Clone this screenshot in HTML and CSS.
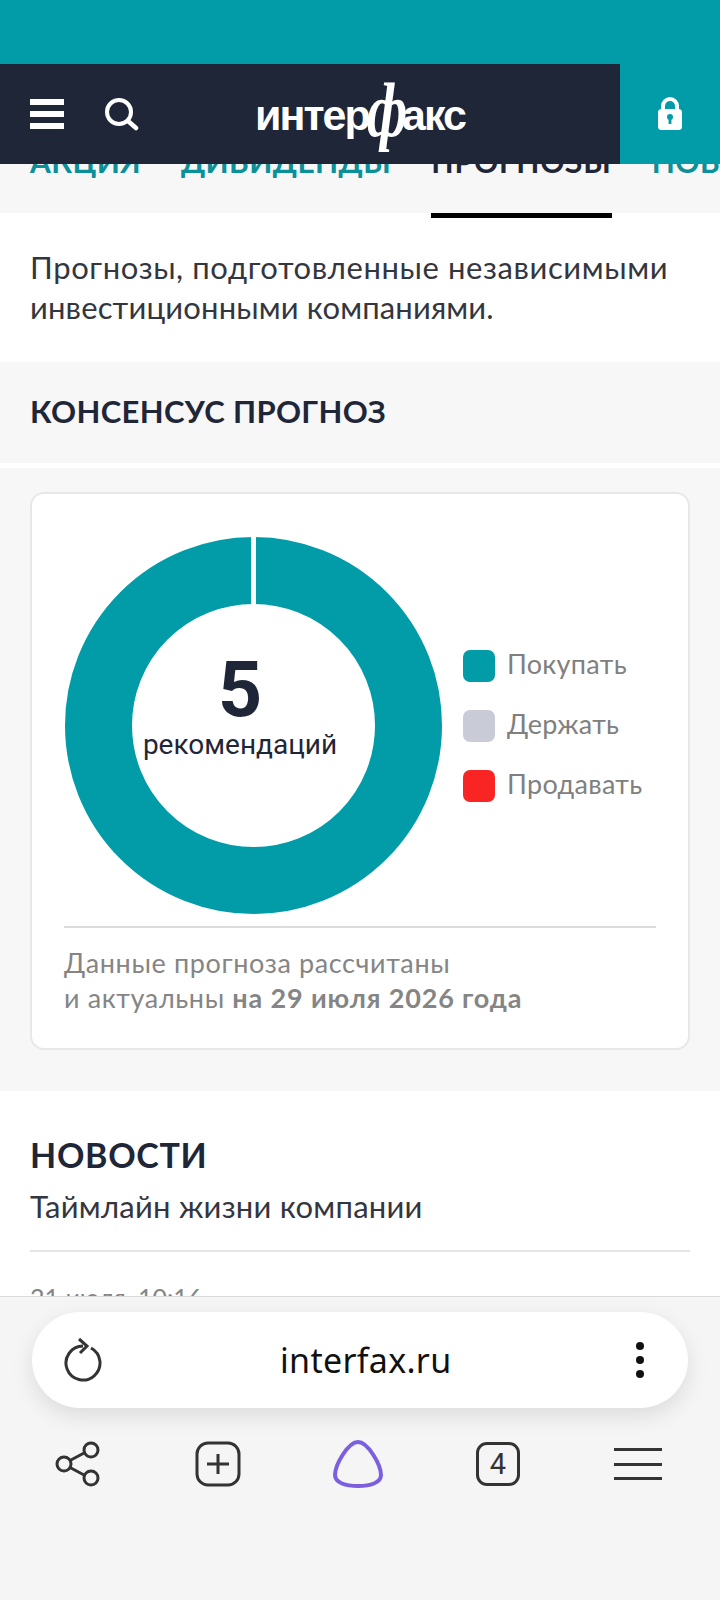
FILE: index.html
```html
<!DOCTYPE html>
<html lang="ru">
  <head>
    <meta charset="utf-8">
    <title>Интерфакс</title>
    <link rel="stylesheet" href="styles.css">
  </head>
  <body>
    <main class="page">
      <nav class="tabs">
        <a class="tab">Акция</a>
        <a class="tab">Дивиденды</a>
        <a class="tab tab-active">Прогнозы</a>
        <a class="tab">Новости</a>
      </nav>

      <p class="intro">Прогнозы, подготовленные независимыми<br><span class="intro-tail">инвестиционными компаниями.</span></p>

      <h2 class="consensus-title">Консенсус прогноз</h2>

      <section class="consensus">
        <div class="card">
          <div class="chart-row">
            <div class="donut">
              <svg width="377" height="377" viewBox="0 0 377 377">
                <circle cx="188.5" cy="188.5" r="155" fill="none" stroke="#019ca8" stroke-width="67"/>
                <rect x="186" y="0" width="5" height="68" fill="#fff"/>
              </svg>
              <div class="donut-label">
                <div class="donut-count">5</div>
                <div class="donut-text">рекомендаций</div>
              </div>
            </div>
            <ul class="legend">
              <li class="legend-item"><span class="swatch swatch-buy"></span><span class="legend-label">Покупать</span></li>
              <li class="legend-item"><span class="swatch swatch-hold"></span><span class="legend-label">Держать</span></li>
              <li class="legend-item"><span class="swatch swatch-sell"></span><span class="legend-label">Продавать</span></li>
            </ul>
          </div>
          <p class="card-note">Данные прогноза рассчитаны<br>и актуальны <b>на 29 июля 2026 года</b></p>
        </div>
      </section>

      <section class="news">
        <h2 class="news-title">Новости</h2>
        <p class="news-sub">Таймлайн жизни компании</p>
        <div class="news-date">21 июля, 10:16</div>
      </section>
    </main>

    <header class="site-header">
      <div class="header-band"></div>
      <div class="header-row">
        <div class="header-main">
          <div class="burger"><span></span><span></span><span></span></div>
          <svg class="search-icon" width="34" height="34" viewBox="0 0 34 34">
            <circle cx="14" cy="15" r="12" fill="none" stroke="#fff" stroke-width="4"/>
            <path d="M23 24l8 7" fill="none" stroke="#fff" stroke-width="4.5" stroke-linecap="round"/>
          </svg>
          <div class="logo">интер<span class="logo-f">ф</span>акс</div>
        </div>
        <div class="header-lock">
          <svg width="26" height="34" viewBox="0 0 26 34">
            <path d="M6 14V9a7 7 0 0 1 14 0v5" fill="none" stroke="#fff" stroke-width="4"/>
            <rect x="1" y="12" width="24" height="21" rx="3.5" fill="#fff"/>
            <circle cx="13" cy="20" r="3" fill="#019ca8"/>
            <rect x="11.6" y="20" width="2.8" height="7" fill="#019ca8"/>
          </svg>
        </div>
      </div>
    </header>

    <footer class="browser-bar">
      <div class="url-pill">
        <svg width="40" height="46" viewBox="0 0 40 46">
          <path d="M27 11A17 17 0 1 1 19 9" fill="none" stroke="#333" stroke-width="3"/>
          <path d="M15 2l8 7-7 7" fill="none" stroke="#333" stroke-width="3"/>
        </svg>
        <span class="url-text">interfax.ru</span>
        <div class="dots"><span></span><span></span><span></span></div>
      </div>
      <div class="toolbar">
        <svg width="46" height="48" viewBox="0 0 46 48">
          <circle cx="9" cy="24" r="7" fill="none" stroke="#333" stroke-width="3"/>
          <circle cx="36" cy="10" r="7" fill="none" stroke="#333" stroke-width="3"/>
          <circle cx="36" cy="38" r="7" fill="none" stroke="#333" stroke-width="3"/>
          <path d="M15 20.500l15-8M15 27.500l15 8" fill="none" stroke="#333" stroke-width="3"/>
        </svg>
        <svg width="46" height="46" viewBox="0 0 46 46">
          <rect x="2" y="2" width="42" height="42" rx="11" fill="none" stroke="#333" stroke-width="3"/>
          <path d="M12 23h22M23 13v20" fill="none" stroke="#333" stroke-width="3"/>
        </svg>
        <svg width="52" height="50" viewBox="0 0 52 50">
          <path d="M26 3C36 3 49 26 49 36C49 44 38 47 26 47C14 47 3 44 3 36C3 26 16 3 26 3Z" fill="none" stroke="#7b5fe0" stroke-width="4"/>
        </svg>
        <div class="tab-count">4</div>
        <div class="menu-lines"><span></span><span></span><span></span></div>
      </div>
    </footer>
  </body>
</html>
```

FILE: styles.css
```css
* {
  box-sizing: border-box;
}

body {
  margin: 0;
  width: 720px;
  height: 1600px;
  position: relative;
  overflow: hidden;
  background: #fff;
  font-family: "Lato", "Open Sans", sans-serif;
  color: #33363e;
}

h2, p, ul {
  margin: 0;
  padding: 0;
}

/* tabs, scrolled under the header */
.tabs {
  display: flex;
  gap: 40px;
  height: 213px;
  padding: 143px 0 0 30px;
  background: #f7f7f8;
}

.tab {
  flex-shrink: 0;
  height: 75px;
  line-height: 36px;
  font-size: 30px;
  font-weight: 700;
  letter-spacing: 0.4px;
  text-transform: uppercase;
  color: #0b8f99;
}

.tab-active {
  color: #1f2638;
  letter-spacing: 0.9px;
  border-bottom: 5px solid #000;
}

.intro {
  padding: 34px 30px 35px;
  font-size: 31px;
  letter-spacing: 0.6px;
  line-height: 40px;
  white-space: nowrap;
}

.intro-tail {
  letter-spacing: 0.15px;
}

.consensus-title {
  height: 101px;
  padding-left: 30px;
  line-height: 98px;
  background: #f7f7f8;
  font-size: 31px;
  font-weight: 700;
  letter-spacing: 0.35px;
  text-transform: uppercase;
  color: #1f2638;
}

.consensus {
  margin-top: 5px;
  padding: 24px 30px 41px;
  background: #f7f7f8;
}

.card {
  height: 558px;
  padding: 43px 32px 0 32px;
  background: #fff;
  border: 2px solid #e8e8ea;
  border-radius: 14px;
}

.chart-row {
  display: flex;
  align-items: center;
  padding-bottom: 12px;
  border-bottom: 2px solid #dcdcdc;
}

.donut {
  position: relative;
  width: 377px;
  height: 377px;
  margin-left: 1px;
  flex-shrink: 0;
}

.donut svg {
  display: block;
}

.donut-label {
  position: absolute;
  left: 0;
  top: 117px;
  width: 350px;
  text-align: center;
}

.donut-count {
  font-family: "Roboto", sans-serif;
  font-size: 77px;
  font-weight: 700;
  line-height: 73px;
  color: #1f2638;
}

.donut-text {
  font-family: "Roboto", sans-serif;
  font-size: 28px;
  line-height: 36px;
  color: #1f2638;
}

.legend {
  list-style: none;
  margin-left: 21px;
  display: flex;
  flex-direction: column;
  gap: 28px;
}

.legend-item {
  display: flex;
  align-items: center;
  gap: 12px;
  height: 32px;
  font-size: 27px;
  letter-spacing: 0.3px;
  color: #808080;
}

.legend-label {
  margin-bottom: 4px;
}

.swatch {
  width: 32px;
  height: 32px;
  border-radius: 7px;
}

.swatch-buy {
  background: #019ca8;
}

.swatch-hold {
  background: #c9ccd6;
}

.swatch-sell {
  background: #f92525;
}

.card-note {
  padding-top: 17px;
  font-size: 27px;
  letter-spacing: 0.62px;
  line-height: 35px;
  color: #858585;
}

.card-note b {
  letter-spacing: 0.85px;
}

.news {
  padding: 42px 30px 0;
}

.news-title {
  font-size: 34px;
  letter-spacing: 0.7px;
  line-height: 44px;
  font-weight: 700;
  text-transform: uppercase;
  color: #1f2638;
}

.news-sub {
  padding: 9px 0 24px;
  font-size: 31px;
  letter-spacing: 0.25px;
  line-height: 40px;
  border-bottom: 2px solid #e6e6e6;
}

.news-date {
  padding-top: 28px;
  font-size: 25px;
  line-height: 34px;
  color: #858585;
}

/* header sits over the page */
.site-header {
  position: absolute;
  top: 0;
  left: 0;
  width: 720px;
}

.header-band {
  height: 64px;
  background: #019ca8;
}

.header-row {
  display: flex;
  height: 100px;
}

.header-main {
  position: relative;
  width: 620px;
  display: flex;
  align-items: center;
  padding-left: 30px;
  background: #1f2638;
}

.burger {
  width: 34px;
  height: 30px;
  display: flex;
  flex-direction: column;
  justify-content: space-between;
}

.burger span {
  height: 6px;
  background: #fff;
}

.search-icon {
  margin-left: 41px;
}

.logo {
  position: absolute;
  left: 255px;
  top: 0;
  line-height: 102px;
  font-family: "Liberation Sans", sans-serif;
  font-size: 43px;
  font-weight: 700;
  letter-spacing: -2px;
  color: #fff;
  white-space: nowrap;
}

.logo-f {
  display: inline-block;
  margin: 0 -12px 0 -9px;
  font-family: "Liberation Serif", serif;
  font-style: italic;
  font-weight: 700;
  font-size: 76px;
  line-height: 0;
  letter-spacing: 0;
  transform: scaleX(0.75) translateY(6px);
}

.header-lock {
  flex: 1;
  display: flex;
  align-items: center;
  justify-content: center;
  background: #019ca8;
  padding-right: 1px;
}

/* browser chrome */
.browser-bar {
  position: absolute;
  left: 0;
  top: 1296px;
  width: 720px;
  height: 304px;
  padding-top: 15px;
  background: #f5f5f5;
  border-top: 1px solid #d9d9d9;
}

.url-pill {
  position: relative;
  display: flex;
  align-items: center;
  width: 656px;
  height: 96px;
  margin-left: 32px;
  padding: 0 0 0 32px;
  background: #fff;
  border-radius: 48px;
  box-shadow: 0 8px 22px rgba(0, 0, 0, 0.1);
}

.url-text {
  margin-left: 176px;
  font-family: "Noto Sans", sans-serif;
  font-size: 34px;
  letter-spacing: 0.3px;
  color: #111;
}

.dots {
  margin-left: 184px;
  display: flex;
  flex-direction: column;
  gap: 6px;
}

.dots span {
  width: 8px;
  height: 8px;
  border-radius: 50%;
  background: #111;
}

.toolbar {
  display: grid;
  grid-template-columns: repeat(5, 140px);
  justify-items: center;
  align-items: center;
  height: 50px;
  margin-top: 31px;
  padding-left: 8px;
}

.tab-count {
  width: 44px;
  height: 44px;
  border: 3px solid #333;
  border-radius: 11px;
  text-align: center;
  font-family: "Roboto", sans-serif;
  font-size: 29px;
  line-height: 38px;
  color: #333;
}

.menu-lines {
  width: 48px;
  height: 32px;
  display: flex;
  flex-direction: column;
  justify-content: space-between;
}

.menu-lines span {
  height: 3px;
  background: #333;
}
```
